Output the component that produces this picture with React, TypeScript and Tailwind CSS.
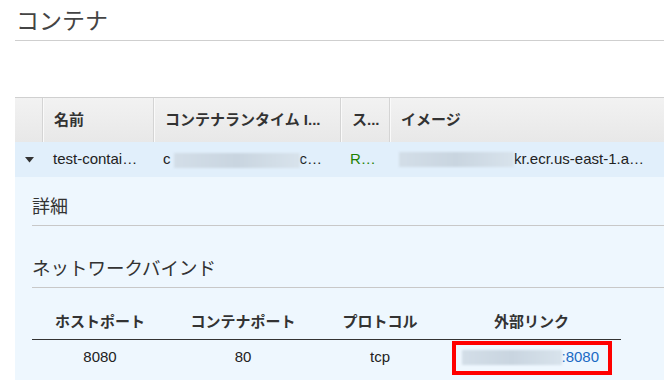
import React from 'react';

const jp = '"Liberation Sans", "Noto Sans CJK JP", sans-serif';

function Blur({ w }: { w: number }) {
  return (
    <span
      className="inline-block h-[15px] bg-gradient-to-r from-[#d3dee8] via-[#c9d5e0] to-[#d8e3ec] blur-[1px] align-middle"
      style={{ width: w }}
    />
  );
}

function HeadCell({ w, children, first }: { w?: number; children?: React.ReactNode; first?: boolean }) {
  return (
    <div
      className={`flex items-center h-full px-[11px] font-bold text-[15px] text-[#333] whitespace-nowrap ${
        first ? '' : 'border-l border-l-[#d4d4d4] shadow-[inset_1px_0_0_#fafafa]'
      } ${w ? 'shrink-0' : 'flex-1'}`}
      style={w ? { width: w } : undefined}
    >
      {children}
    </div>
  );
}

function Cell({ w, children }: { w?: number; children?: React.ReactNode }) {
  return (
    <div
      className={`flex items-center h-full px-[10px] text-[15px] text-[#222] whitespace-nowrap overflow-hidden ${
        w ? 'shrink-0' : 'flex-1'
      }`}
      style={w ? { width: w } : undefined}
    >
      {children}
    </div>
  );
}

export default function App() {
  return (
    <div className="w-[664px] h-[380px] overflow-hidden bg-white" style={{ fontFamily: jp }}>
      <div className="pl-[15px]">
        <h1
          className="h-[41px] pl-px pt-[4px] border-b border-[#cfcfcf] text-[23px] leading-[30px] text-[#444] font-normal"
          style={{ fontFamily: '"Noto Sans CJK JP", sans-serif' }}
        >
          コンテナ
        </h1>

        <div className="mt-[56px]">
          {/* header row */}
          <div className="flex h-[45px] border-t border-[#d0d0d0] bg-gradient-to-b from-[#f2f2f2] to-[#e8e8e8]">
            <HeadCell w={27} first />
            <HeadCell w={111}>名前</HeadCell>
            <HeadCell w={187}>コンテナランタイム I...</HeadCell>
            <HeadCell w={49}>ス...</HeadCell>
            <HeadCell>イメージ</HeadCell>
          </div>

          {/* selected row */}
          <div className="flex h-[35px] bg-[#e1effb]">
            <div className="w-[27px] shrink-0 flex items-center justify-center pl-[2px]">
              <svg width="9" height="6" viewBox="0 0 9 6">
                <path d="M0 0h9L4.5 5.5z" fill="#333" />
              </svg>
            </div>
            <Cell w={111}>
              <span className="pl-px">test-contai…</span>
            </Cell>
            <Cell w={187}>
              c<span className="ml-[3px]"><Blur w={126} /></span>c…
            </Cell>
            <Cell w={49}>
              <span className="text-[#1d8102]">R…</span>
            </Cell>
            <Cell>
              <Blur w={115} />
              <span>kr.ecr.us-east-1.a…</span>
            </Cell>
          </div>

          {/* expanded detail */}
          <div className="bg-[#eef7fe] h-[210px] pl-[17px] pt-[17px]">
            <div className="h-[32px] border-b border-[#c8c8c8] text-[18px] leading-[26px] text-[#333]">詳細</div>
            <div className="mt-[30px] h-[32px] border-b border-[#c8c8c8] text-[18.5px] leading-[26px] text-[#333]">
              ネットワークバインド
            </div>

            <div className="w-[589px] mt-[18px]">
              <div className="flex h-[34px] border-b border-[#333] text-[15px] font-bold text-[#333]">
                <div className="w-[136px] flex items-center justify-center">ホストポート</div>
                <div className="w-[150px] flex items-center justify-center">コンテナポート</div>
                <div className="w-[124px] flex items-center justify-center">プロトコル</div>
                <div className="w-[179px] flex items-center justify-center">外部リンク</div>
              </div>
              <div className="flex h-[35px] text-[15px] text-[#222]">
                <div className="w-[136px] flex items-center justify-center">8080</div>
                <div className="w-[150px] flex items-center justify-center">80</div>
                <div className="w-[124px] flex items-center justify-center">tcp</div>
                <div className="w-[179px] flex items-center justify-center">
                  <div className="relative flex items-center h-[34px] w-[160px] pl-[6px] border-[4px] border-[#ff0000]">
                    <Blur w={100} />
                    <span className="text-[#1b6ac4]">:8080</span>
                  </div>
                </div>
              </div>
            </div>
          </div>
        </div>
      </div>
    </div>
  );
}
